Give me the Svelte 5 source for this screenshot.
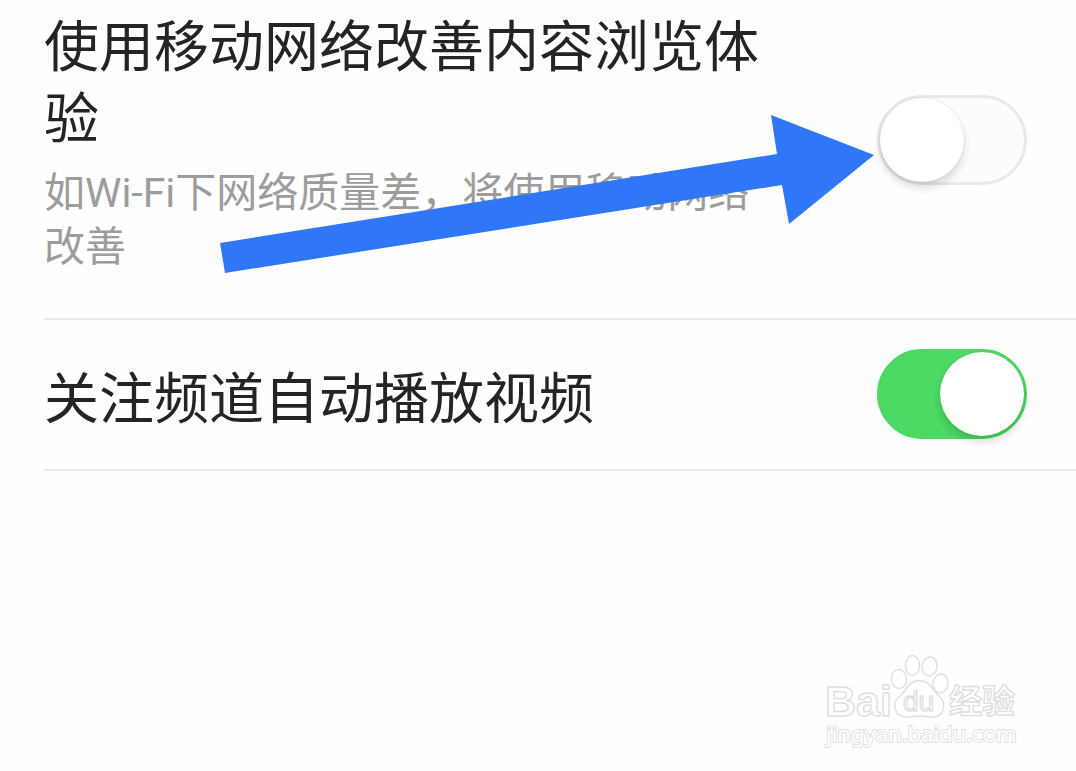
<script>
  let mobileData = $state(false);
  let autoplay = $state(true);
</script>

<main class="page">
  <section class="row first">
    <div class="copy">
      <label class="title" for="mobile-data">使用移动网络改善内容浏览体验</label>
      <p class="note" id="mobile-note">如Wi-Fi下网络质量差，将使用移动网络改善</p>
    </div>
    <input
      class="switch"
      id="mobile-data"
      type="checkbox"
      role="switch"
      aria-describedby="mobile-note"
      bind:checked={mobileData}
    />
  </section>

  <section class="row second">
    <div class="copy">
      <label class="title" for="autoplay">关注频道自动播放视频</label>
    </div>
    <input class="switch" id="autoplay" type="checkbox" role="switch" bind:checked={autoplay} />
  </section>

  <svg class="arrow" width="656" height="160" viewBox="0 0 656 160" aria-hidden="true">
    <path d="M0 129L557 40L551 1L654 41L569 110L562 71L5 159Z" fill="#2f77f6" />
  </svg>

  <svg class="watermark" width="200" height="100" viewBox="0 0 200 100">
    <g fill="#fff" stroke="#dedede" stroke-width="1.4" stroke-linejoin="round">
      <text class="brand" x="3" y="65" font-size="43">Bai</text>
      <ellipse cx="77" cy="28" rx="7.5" ry="9.5" transform="rotate(-8 77 28)" />
      <ellipse cx="90.500" cy="14.500" rx="7" ry="10" />
      <ellipse cx="107.500" cy="15.500" rx="7.500" ry="9.500" transform="rotate(10 107.5 15.5)" />
      <ellipse cx="118.500" cy="32.500" rx="7.500" ry="9.500" transform="rotate(10 118.500 32.500)" />
      <path d="M97 29.500C86 29.500 85 40 77 46C70 52 72 65 84 66C90 66 92 65 97 65C102 65 105 66 111 66C123 65 125 52 117 45C110 39 108 29.500 97 29.500Z" />
      <text class="mark" x="81" y="60" font-size="28">du</text>
      <text class="cjk" x="127" y="62" font-size="33">经验</text>
    </g>
    <text class="domain" x="4" y="91" font-size="22">jingyan.baidu.com</text>
  </svg>
</main>

<style>
  :global(body) {
    margin: 0;
    background: #fefefe;
  }

  .page {
    position: relative;
    min-height: 100vh;
    box-sizing: border-box;
    padding-left: 44px;
    overflow: hidden;
    font-family: "Noto Sans CJK SC", sans-serif;
    color: #242424;
  }

  .row {
    display: flex;
    align-items: center;
    gap: 100px;
    padding-right: 49px;
    border-bottom: 2px solid #e8e8e8;
  }

  .first {
    padding-top: 6px;
    padding-bottom: 44px;
  }

  .second {
    padding-top: 29px;
    padding-bottom: 30px;
  }

  .copy {
    flex: 1;
    min-width: 0;
  }

  .title {
    display: block;
    font-size: 55px;
    line-height: 72px;
  }

  .note {
    margin: 16px 0 0;
    font-family: Roboto, "Noto Sans CJK SC", sans-serif;
    font-size: 41px;
    line-height: 54px;
    color: #9c9c9c;
  }

  .switch {
    appearance: none;
    flex: none;
    position: relative;
    width: 150px;
    height: 90px;
    margin: 0;
    box-sizing: border-box;
    border: 3px solid #e9e9e9;
    border-radius: 45px;
    background: #fcfcfc;
    cursor: pointer;
  }

  .switch::before {
    content: "";
    position: absolute;
    top: 0;
    left: 0;
    width: 84px;
    height: 84px;
    border-radius: 50%;
    background: #fff;
    box-shadow: 0 6px 8px rgb(0 0 0 / 14%), 0 0 2px rgb(0 0 0 / 12%);
  }

  .switch:checked {
    border-color: #4cd964;
    background: #4cd964;
  }

  .switch:checked::before {
    left: auto;
    right: 0;
  }

  .arrow {
    position: absolute;
    top: 114px;
    left: 220px;
    pointer-events: none;
  }

  .watermark {
    position: absolute;
    right: 54px;
    bottom: 20px;
  }

  .brand {
    font-family: "Liberation Sans", sans-serif;
    font-weight: 700;
  }

  .mark {
    font-family: "Liberation Sans", sans-serif;
  }

  .cjk {
    font-family: "Noto Sans CJK SC", sans-serif;
    font-weight: 700;
  }

  .domain {
    font-family: "Noto Sans", sans-serif;
    fill: #fff;
    stroke: #e0e0e0;
    stroke-width: 2px;
    paint-order: stroke;
  }
</style>
